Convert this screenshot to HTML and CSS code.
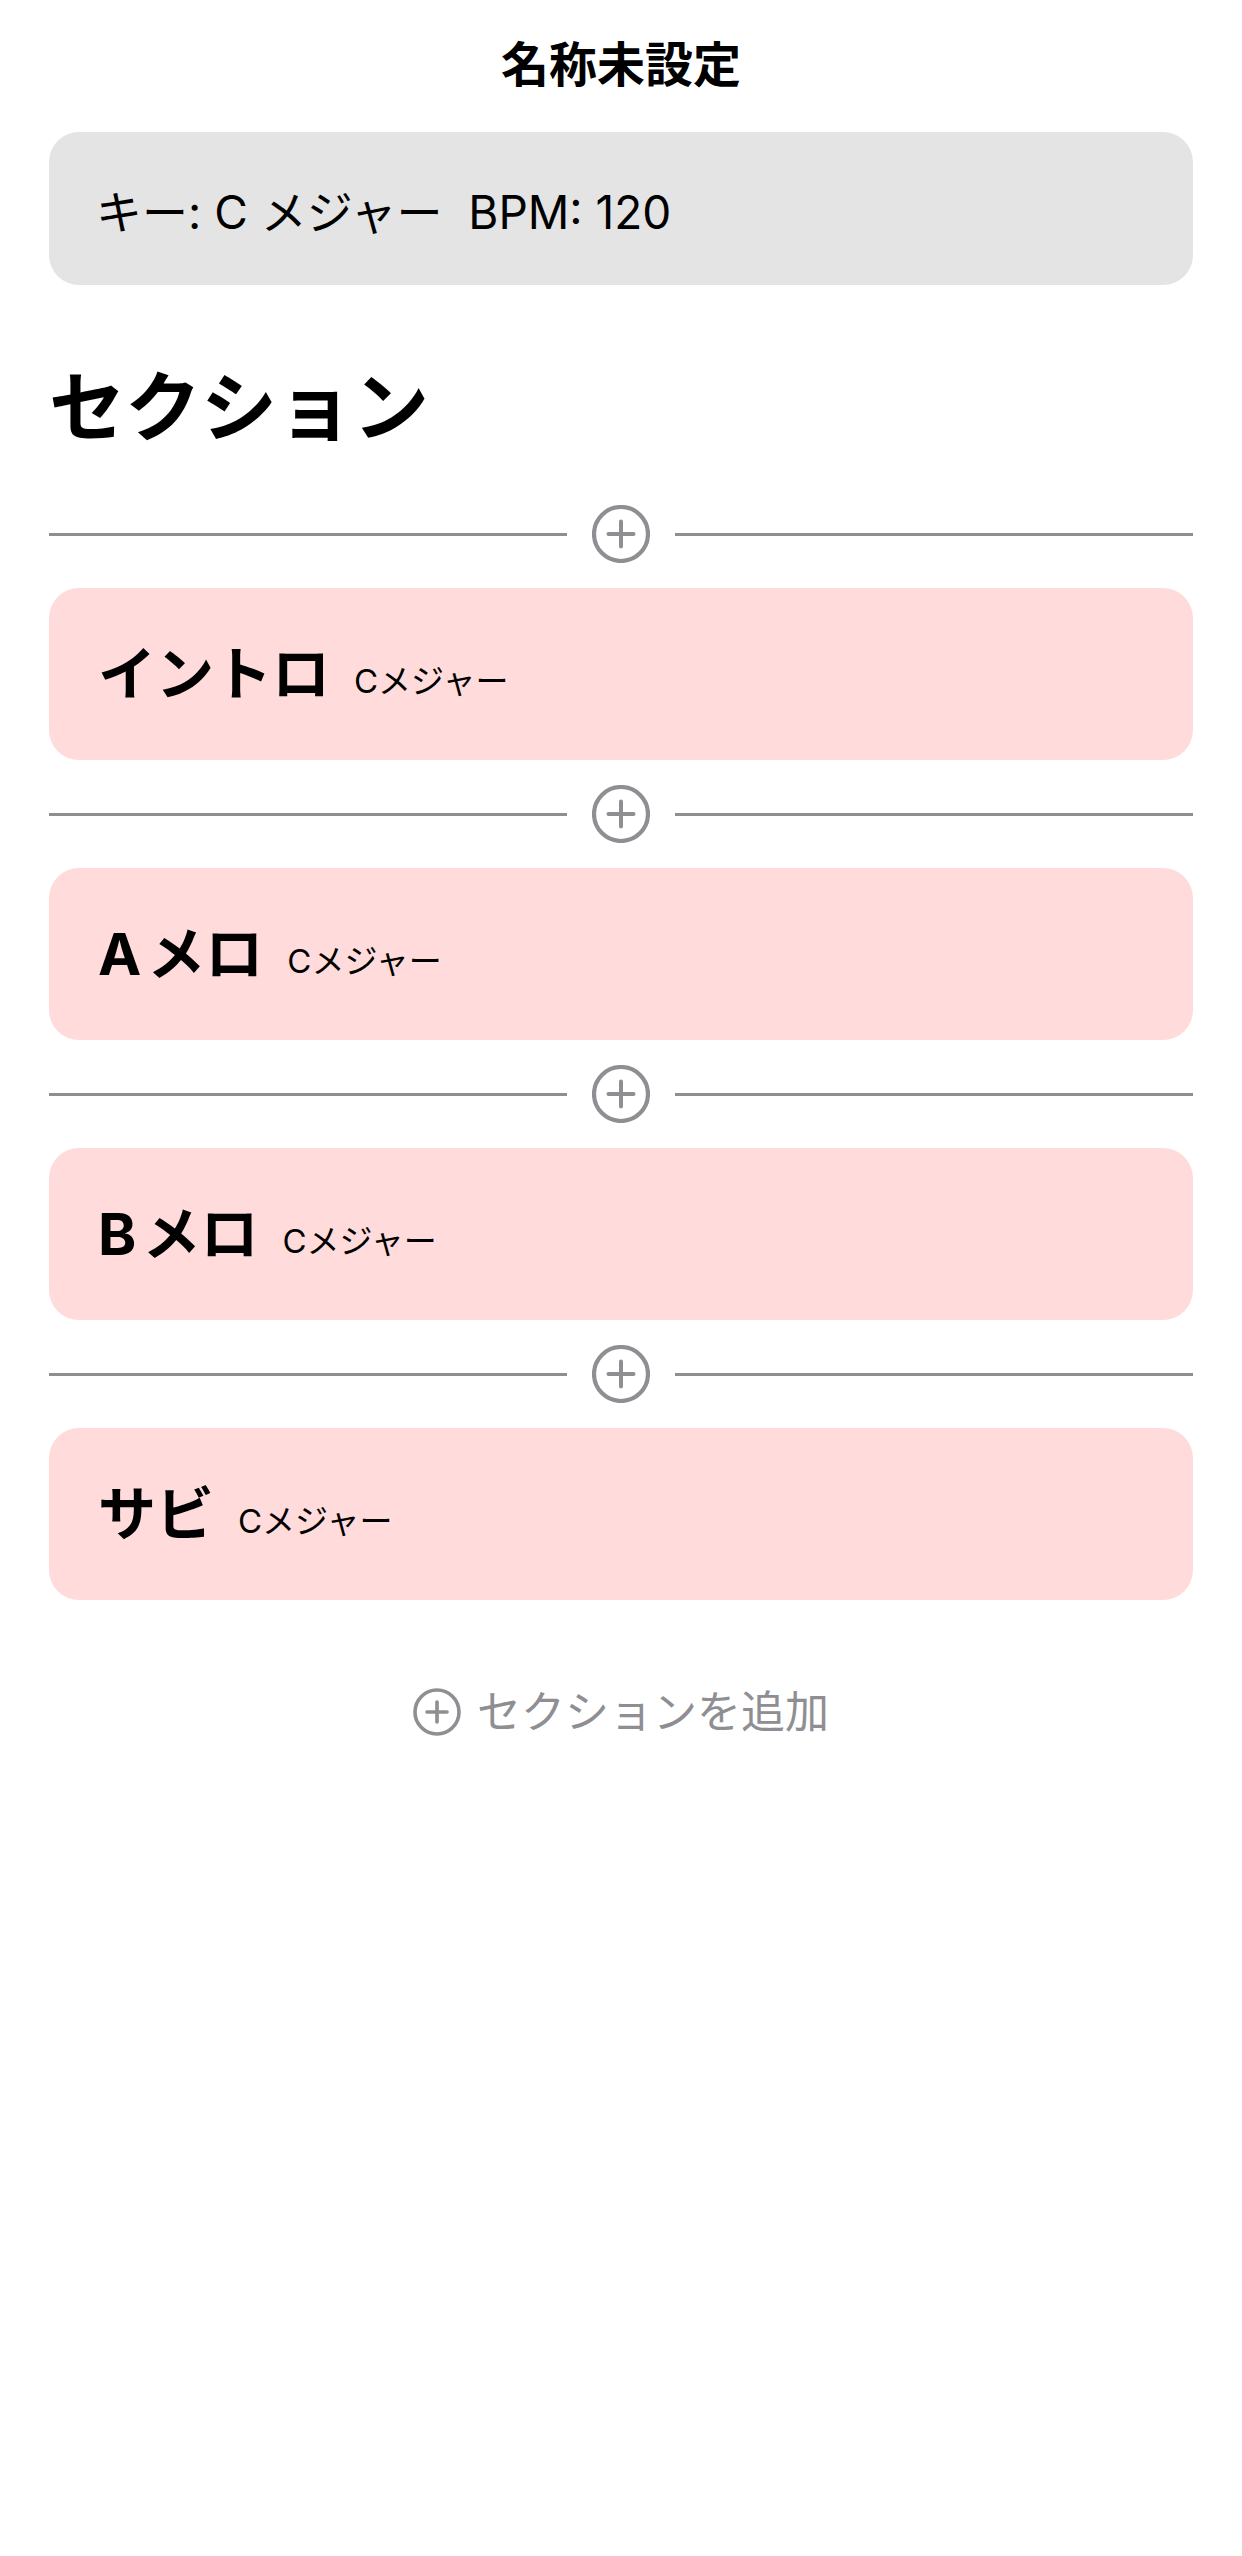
FILE: index.html
```html
<!DOCTYPE html>
<html lang="ja">
<head>
<meta charset="utf-8">
<title>名称未設定</title>
<link rel="stylesheet" href="styles.css">
</head>
<body>
<header class="nav">
  <h1 class="nav-title">名称未設定</h1>
</header>
<main class="content">
  <div class="info">キー: C メジャー  BPM: 120</div>
  <h2 class="heading">セクション</h2>
  <div class="list">
    <div class="divider">
      <span class="line"></span>
      <svg class="plus" width="58" height="58" viewBox="0 0 58 58"><circle cx="29" cy="29" r="27" fill="none" stroke="#8e8e93" stroke-width="4.2"/><path d="M16.5 29H41.5M29 16.5V41.5" stroke="#8e8e93" stroke-width="4" stroke-linecap="round"/></svg>
      <span class="line"></span>
    </div>
    <div class="card"><span class="card-title">イントロ</span><span class="card-sub">Cメジャー</span></div>
    <div class="divider">
      <span class="line"></span>
      <svg class="plus" width="58" height="58" viewBox="0 0 58 58"><circle cx="29" cy="29" r="27" fill="none" stroke="#8e8e93" stroke-width="4.2"/><path d="M16.5 29H41.5M29 16.5V41.5" stroke="#8e8e93" stroke-width="4" stroke-linecap="round"/></svg>
      <span class="line"></span>
    </div>
    <div class="card"><span class="card-title">A<span class="sp"></span>メロ</span><span class="card-sub">Cメジャー</span></div>
    <div class="divider">
      <span class="line"></span>
      <svg class="plus" width="58" height="58" viewBox="0 0 58 58"><circle cx="29" cy="29" r="27" fill="none" stroke="#8e8e93" stroke-width="4.2"/><path d="M16.5 29H41.5M29 16.5V41.5" stroke="#8e8e93" stroke-width="4" stroke-linecap="round"/></svg>
      <span class="line"></span>
    </div>
    <div class="card"><span class="card-title">B<span class="sp"></span>メロ</span><span class="card-sub">Cメジャー</span></div>
    <div class="divider">
      <span class="line"></span>
      <svg class="plus" width="58" height="58" viewBox="0 0 58 58"><circle cx="29" cy="29" r="27" fill="none" stroke="#8e8e93" stroke-width="4.2"/><path d="M16.5 29H41.5M29 16.5V41.5" stroke="#8e8e93" stroke-width="4" stroke-linecap="round"/></svg>
      <span class="line"></span>
    </div>
    <div class="card"><span class="card-title">サビ</span><span class="card-sub">Cメジャー</span></div>
  </div>
  <div class="add">
    <svg class="add-icon" width="48" height="48" viewBox="0 0 48 48"><circle cx="24" cy="24" r="22" fill="none" stroke="#8e8e93" stroke-width="3.6"/><path d="M14 24H34M24 14V34" stroke="#8e8e93" stroke-width="3.6" stroke-linecap="round"/></svg>
    <span class="add-label">セクションを追加</span>
  </div>
</main>
</body>
</html>
```

FILE: styles.css
```css
* { box-sizing: border-box; }
html, body { margin: 0; padding: 0; background: #ffffff; }
body {
  font-family: "Inter", "Noto Sans CJK JP", sans-serif;
  color: #000;
  width: 1242px;
}
.nav {
  height: 130px;
  display: flex;
  align-items: center;
  justify-content: center;
}
.nav-title {
  margin: 0;
  font-size: 48px;
  font-weight: 700;
  line-height: 1;
}
.content {
  padding: 2px 49px 0;
  display: flex;
  flex-direction: column;
}
.info {
  height: 153px;
  background: #e4e4e4;
  border-radius: 30px;
  padding-left: 47px;
  display: flex;
  align-items: center;
  font-size: 46px;
  white-space: pre;
}
.heading {
  margin: 76px 0 0;
  font-size: 76px;
  font-weight: 700;
  line-height: 92px;
}
.list {
  margin-top: 52px;
  display: flex;
  flex-direction: column;
  gap: 25px;
}
.divider {
  height: 58px;
  display: flex;
  align-items: center;
  gap: 25px;
}
.line {
  flex: 1;
  height: 3px;
  background: #8e8e93;
}
.plus { display: block; flex: none; }
.card {
  height: 172px;
  background: #ffdbdb;
  border-radius: 30px;
  padding-left: 49px;
  display: flex;
  align-items: center;
  gap: 24px;
}
.card-title {
  font-size: 58px;
  font-weight: 700;
  line-height: 1;
}
.sp {
  display: inline-block;
  width: 6px;
}
.card-sub {
  font-size: 33px;
  line-height: 1;
  margin-top: 14px;
}
.add {
  margin-top: 82px;
  height: 60px;
  display: flex;
  align-items: center;
  justify-content: center;
  gap: 16px;
}
.add-icon { display: block; flex: none; }
.add-label {
  font-size: 44px;
  color: #8e8e93;
  line-height: 1;
}
```
